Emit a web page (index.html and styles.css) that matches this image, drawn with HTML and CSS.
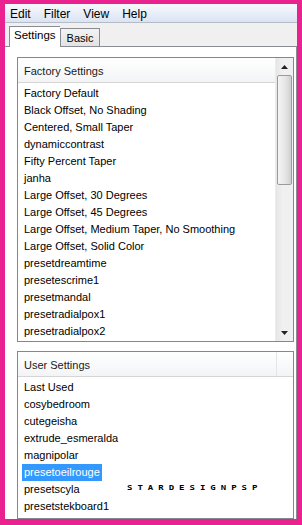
FILE: index.html
```html
<!DOCTYPE html>
<html>
<head>
    <meta charset="UTF-8">
    <title>Presets</title>
    <link rel="stylesheet" href="styles.css">
</head>
<body>
    <div class="window">
        <div class="menu-bar">
            <span class="menu-item">Edit</span>
            <span class="menu-item">Filter</span>
            <span class="menu-item">View</span>
            <span class="menu-item">Help</span>
        </div>

        <div class="tab-strip">
            <div class="tab tab-active">Settings</div>
            <div class="tab">Basic</div>
        </div>

        <div class="tab-pane">
            <div class="list-box factory-box">
                <div class="list-main">
                    <div class="list-header">
                        <div class="header-cell">Factory Settings</div>
                    </div>
                    <div class="list-items">
                        <div class="list-row"><span>Factory Default</span></div>
                        <div class="list-row"><span>Black Offset, No Shading</span></div>
                        <div class="list-row"><span>Centered, Small Taper</span></div>
                        <div class="list-row"><span>dynamiccontrast</span></div>
                        <div class="list-row"><span>Fifty Percent Taper</span></div>
                        <div class="list-row"><span>janha</span></div>
                        <div class="list-row"><span>Large Offset, 30 Degrees</span></div>
                        <div class="list-row"><span>Large Offset, 45 Degrees</span></div>
                        <div class="list-row"><span>Large Offset, Medium Taper, No Smoothing</span></div>
                        <div class="list-row"><span>Large Offset, Solid Color</span></div>
                        <div class="list-row"><span>presetdreamtime</span></div>
                        <div class="list-row"><span>presetescrime1</span></div>
                        <div class="list-row"><span>presetmandal</span></div>
                        <div class="list-row"><span>presetradialpox1</span></div>
                        <div class="list-row"><span>presetradialpox2</span></div>
                    </div>
                </div>
                <div class="scrollbar">
                    <div class="scroll-arrow">
                        <svg width="7" height="4" viewBox="0 0 7 4"><path d="M3.5 0 L7 4 L0 4 Z" fill="#222"/></svg>
                    </div>
                    <div class="scroll-track">
                        <div class="scroll-thumb"></div>
                    </div>
                    <div class="scroll-arrow">
                        <svg width="7" height="4" viewBox="0 0 7 4"><path d="M0 0 L7 0 L3.5 4 Z" fill="#222"/></svg>
                    </div>
                </div>
            </div>

            <div class="list-box user-box">
                <div class="list-main">
                    <div class="list-header">
                        <div class="header-cell">User Settings</div>
                        <div class="header-filler"></div>
                    </div>
                    <div class="list-items">
                        <div class="list-row"><span>Last Used</span></div>
                        <div class="list-row"><span>cosybedroom</span></div>
                        <div class="list-row"><span>cutegeisha</span></div>
                        <div class="list-row"><span>extrude_esmeralda</span></div>
                        <div class="list-row"><span>magnipolar</span></div>
                        <div class="list-row"><span class="selected">presetoeilrouge</span></div>
                        <div class="list-row"><span>presetscyla</span></div>
                        <div class="list-row"><span>presetstekboard1</span></div>
                    </div>
                </div>
            </div>
        </div>
    </div>
    <div class="watermark">STARDESIGNPSP</div>
</body>
</html>
```

FILE: styles.css
```css
html, body {
    height: 525px;
}

body {
    margin: 0;
    padding: 4px 5px 6px 5px;
    box-sizing: border-box;
    background-color: #ea2290;
    font-family: "Liberation Sans", Arial, sans-serif;
    color: #000;
    overflow: hidden;
    position: relative;
}

.window {
    height: 100%;
    display: flex;
    flex-direction: column;
    background: #fff;
    overflow: hidden;
}

/* menu */
.menu-bar {
    height: 19px;
    display: flex;
    align-items: center;
    gap: 13px;
    padding: 1px 0 0 5px;
    box-sizing: border-box;
    font-size: 12px;
    background: linear-gradient(#f7f9fd, #dbe3f3);
    border-bottom: 1px solid #b6bcc6;
    flex-shrink: 0;
}

/* tabs */
.tab-strip {
    height: 23px;
    display: flex;
    align-items: flex-end;
    padding-left: 4px;
    background: #f0f0f0;
    border-bottom: 1px solid #898c95;
    flex-shrink: 0;
}

.tab {
    height: 16px;
    padding: 1px 6px 0 6px;
    font-size: 11px;
    line-height: 16px;
    border: 1px solid #898c95;
    border-bottom: none;
    background: linear-gradient(#f2f2f2, #e3e3e3);
}

.tab-active {
    height: 20px;
    padding: 0 4px;
    font-size: 11.5px;
    line-height: 17px;
    background: #fff;
    margin-bottom: -1px;
    border-right: none;
    position: relative;
    z-index: 1;
}

.tab-active + .tab {
    border-left: 1px solid #898c95;
}

.tab-pane {
    flex: 1;
    padding: 10px 2px 0 12px;
    border-right: 1px solid #898c95;
    display: flex;
    flex-direction: column;
    gap: 9px;
}

/* list boxes */
.list-box {
    width: 277px;
    box-sizing: border-box;
    border: 1px solid #828790;
    display: flex;
    background: #fff;
    font-size: 11px;
    flex-shrink: 0;
}

.factory-box {
    height: 285px;
}

.user-box {
    flex: 1;
}

.list-main {
    flex: 1;
    display: flex;
    flex-direction: column;
}

.list-header {
    height: 24px;
    display: flex;
    background: linear-gradient(#ffffff, #f3f4f6);
    border-bottom: 1px solid #d5d5d5;
    flex-shrink: 0;
}

.header-cell {
    flex: 1;
    padding: 2px 0 0 6px;
    line-height: 22px;
    color: #1a1a1a;
}

.user-box .header-cell {
    border-right: 1px solid #e3e5e8;
}

.header-filler {
    width: 16px;
}

.list-items {
    padding: 2px 0 0 4px;
}

.list-row {
    height: 17px;
    line-height: 17px;
    white-space: nowrap;
}

.list-row span {
    display: inline-block;
    padding: 0 2px;
}

.list-row .selected {
    background: #3399ff;
    color: #fff;
}

/* scrollbar */
.scrollbar {
    width: 17px;
    display: flex;
    flex-direction: column;
    background: linear-gradient(90deg, #e6e6e6, #f0f0f0 40%, #f0f0f0);
    border-left: 1px solid #ececec;
}

.scroll-arrow {
    height: 17px;
    display: flex;
    align-items: center;
    justify-content: center;
}

.scroll-track {
    flex: 1;
    padding: 0 1px;
}

.scroll-thumb {
    height: 108px;
    border: 1px solid #9b9b9b;
    border-radius: 2px;
    background: linear-gradient(90deg, #f4f4f4, #e4e4e4 60%, #cfcfcf);
}

/* watermark over the list */
.watermark {
    position: absolute;
    left: 127px;
    top: 483px;
    font-family: "DejaVu Sans Mono", monospace;
    font-weight: bold;
    font-size: 9px;
    letter-spacing: 5px;
    color: #000;
    transform: scaleY(0.8);
}
```
